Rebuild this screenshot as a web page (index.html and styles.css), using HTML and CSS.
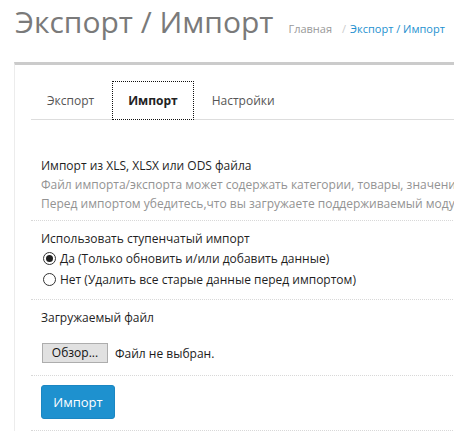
FILE: index.html
```html
<!DOCTYPE html>
<html lang="ru">
<head>
<meta charset="utf-8">
<title>Экспорт / Импорт</title>
<link rel="stylesheet" href="styles.css">
</head>
<body>
<div class="page-header">
  <h1>Экспорт / Импорт</h1>
  <ul class="breadcrumb">
    <li><a href="#">Главная</a></li>
    <li class="sep">/</li>
    <li class="current"><a href="#">Экспорт / Импорт</a></li>
  </ul>
</div>
<div class="card">
  <ul class="tabs">
    <li><a href="#">Экспорт</a></li>
    <li class="active"><a href="#">Импорт</a></li>
    <li><a href="#">Настройки</a></li>
  </ul>
  <div class="tab-content">
    <div class="group first">
      <div class="label">Импорт из XLS, XLSX или ODS файла</div>
      <div class="help">Файл импорта/экспорта может содержать категории, товары, значения атрибутов, опции и фильтры.</div>
      <div class="help">Перед импортом убедитесь,что вы загружаете поддерживаемый модулем файл.</div>
    </div>
    <div class="group second">
      <div class="label">Использовать ступенчатый импорт</div>
      <label class="radio"><span class="dot checked"></span>Да (Только обновить и/или добавить данные)</label>
      <label class="radio"><span class="dot"></span>Нет (Удалить все старые данные перед импортом)</label>
    </div>
    <div class="group third">
      <div class="label">Загружаемый файл</div>
      <div class="file">
        <button class="browse" type="button">Обзор...</button>
        <span class="filename">Файл не выбран.</span>
      </div>
    </div>
    <div class="group fourth">
      <button class="btn-primary" type="button">Импорт</button>
    </div>
  </div>
</div>
</body>
</html>
```

FILE: styles.css
```css
html, body {
  margin: 0;
  padding: 0;
  background: #fff;
  overflow: hidden;
}
body {
  font-family: "Open Sans", "Noto Sans", sans-serif;
  font-size: 12px;
  color: #222;
  width: 454px;
  height: 438px;
}
.page-header {
  display: flex;
  align-items: baseline;
  padding: 4px 0 0 15px;
  height: 62px;
  box-sizing: border-box;
  white-space: nowrap;
}
.page-header h1 {
  margin: 0 15px 0 0;
  font-size: 30px;
  line-height: 35px;
  font-weight: 400;
  color: #7a7a7a;
}
.breadcrumb {
  display: flex;
  list-style: none;
  margin: 0;
  padding: 0;
  font-size: 11px;
}
.breadcrumb a {
  color: #999;
  text-decoration: none;
}
.breadcrumb .sep {
  color: #ccc;
  padding: 0 4px 0 10px;
}
.breadcrumb .current a {
  color: #1e91cf;
}
.card {
  margin-left: 14px;
  width: 900px;
  border-left: 1px solid #ececec;
  border-top: 3px solid #cbcbcb;
  padding: 16px 15px 0 16px;
  white-space: nowrap;
}
.tabs {
  display: flex;
  list-style: none;
  margin: 0;
  padding: 0;
  border-bottom: 1px solid #ddd;
  font-size: 12px;
}
.tabs li {
  margin: 0 2px -1px 0;
}
.tabs a {
  display: block;
  padding: 10px 15px;
  line-height: 17px;
  border: 1px solid transparent;
  color: #555;
  text-decoration: none;
}
.tabs .active a {
  border: 1px dotted #111;
  color: #222;
  font-weight: 700;
  background: #fff;
}
.tab-content {
  padding-top: 26px;
}
.group {
  padding: 10px 0 7px 10px;
  border-bottom: 1px dotted #d8d8d8;
  line-height: 19px;
}
.label {
  color: #1f1f1f;
}
.help {
  color: #939393;
}
.second {
  padding-top: 8px;
  padding-bottom: 9px;
}
.radio {
  display: flex;
  align-items: center;
  height: 21px;
  color: #1f1f1f;
}
.dot {
  width: 11px;
  height: 11px;
  border: 1px solid #333;
  border-radius: 50%;
  margin: 0 4px 0 2px;
  box-sizing: content-box;
  display: flex;
  align-items: center;
  justify-content: center;
  background: #fff;
}
.dot.checked::after {
  content: "";
  width: 7px;
  height: 7px;
  border-radius: 50%;
  background: #222;
}
.third {
  padding-top: 8px;
  padding-bottom: 12px;
}
.file {
  display: flex;
  align-items: center;
  margin-top: 16px;
  gap: 7px;
}
.browse {
  font-family: "Open Sans", "Noto Sans", sans-serif;
  font-size: 12px;
  height: 20px;
  width: 66px;
  padding: 0;
  line-height: 18px;
  border: 1px solid #adadad;
  background: #e1e1e1;
  color: #111;
  margin-left: 1px;
}
.filename {
  color: #1a1a1a;
}
.fourth {
  padding-top: 9px;
  padding-bottom: 11px;
}
.btn-primary {
  font-family: "Open Sans", "Noto Sans", sans-serif;
  font-size: 13px;
  height: 34px;
  width: 74px;
  padding: 0;
  border: 1px solid #1b86c2;
  border-radius: 3px;
  background: #1e91cf;
  color: #fff;
  display: block;
}
```
